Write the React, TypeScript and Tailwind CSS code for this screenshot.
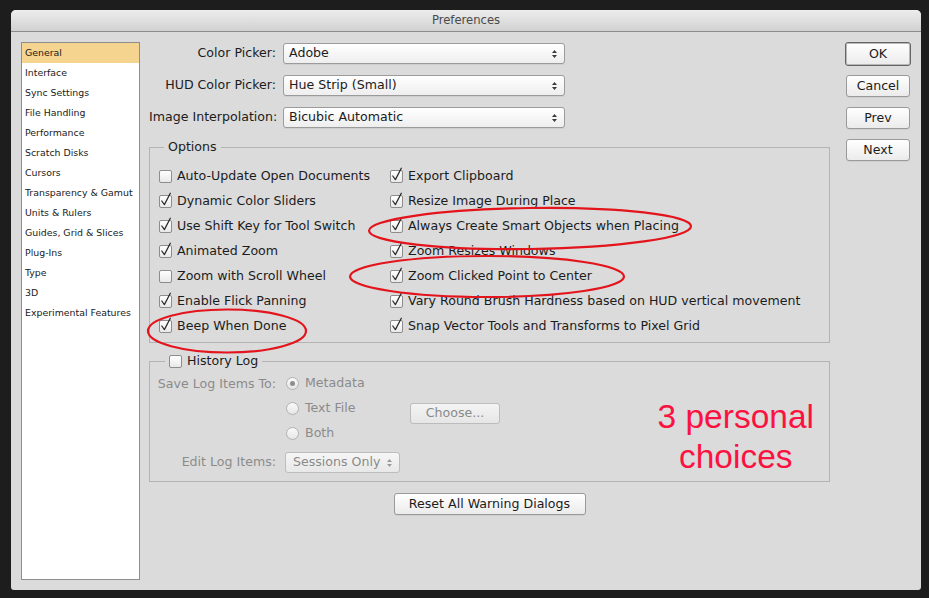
import React from "react";

const sidebarItems = [
  "General",
  "Interface",
  "Sync Settings",
  "File Handling",
  "Performance",
  "Scratch Disks",
  "Cursors",
  "Transparency & Gamut",
  "Units & Rulers",
  "Guides, Grid & Slices",
  "Plug-Ins",
  "Type",
  "3D",
  "Experimental Features",
];

const leftOptions: [string, boolean][] = [
  ["Auto-Update Open Documents", false],
  ["Dynamic Color Sliders", true],
  ["Use Shift Key for Tool Switch", true],
  ["Animated Zoom", true],
  ["Zoom with Scroll Wheel", false],
  ["Enable Flick Panning", true],
  ["Beep When Done", true],
];

const rightOptions: [string, boolean][] = [
  ["Export Clipboard", true],
  ["Resize Image During Place", true],
  ["Always Create Smart Objects when Placing", true],
  ["Zoom Resizes Windows", true],
  ["Zoom Clicked Point to Center", true],
  ["Vary Round Brush Hardness based on HUD vertical movement", true],
  ["Snap Vector Tools and Transforms to Pixel Grid", true],
];

function Checkbox({ checked }: { checked?: boolean }) {
  return (
    <span className="relative inline-block w-[13px] h-[13px] shrink-0 rounded-[2px] border border-[#8d8d8d] bg-linear-to-b from-white to-[#e9e9e9]">
      {checked && (
        <svg
          className="absolute left-[-1px] top-[-1px] overflow-visible"
          width="13"
          height="13"
          viewBox="0 0 13 13"
        >
          <path
            d="M2.8 6 L5.4 9.6 L11.3 -1.8"
            fill="none"
            stroke="#2a2a2a"
            strokeWidth="1.25"
            strokeLinecap="round"
            strokeLinejoin="round"
          />
        </svg>
      )}
    </span>
  );
}

function Radio({ selected }: { selected?: boolean }) {
  return (
    <span className="flex items-center justify-center w-[13px] h-[13px] shrink-0 rounded-full border border-[#b2b2b2] bg-linear-to-b from-[#fafafa] to-[#e6e6e6]">
      {selected && <span className="w-[5px] h-[5px] rounded-full bg-[#8e8e8e]" />}
    </span>
  );
}

function Arrows({ color }: { color: string }) {
  return (
    <svg width="7" height="10" viewBox="0 0 7 10">
      <path d="M1 4 L3.5 1 L6 4 Z" fill={color} />
      <path d="M1 6 L3.5 9 L6 6 Z" fill={color} />
    </svg>
  );
}

function Select({ value, disabled }: { value: string; disabled?: boolean }) {
  return (
    <div
      className={
        disabled
          ? "flex items-center justify-between h-[21px] pl-[7px] pr-[6px] rounded-[3px] border border-[#bdbdbd] bg-linear-to-b from-[#f6f6f6] to-[#e8e8e8] text-[#8a8a8a]"
          : "flex items-center justify-between h-[21px] pl-[5px] pr-[6px] rounded-[3px] border border-[#9b9b9b] bg-linear-to-b from-white to-[#eeeeee] shadow-[0_1px_0_rgba(0,0,0,0.06)]"
      }
    >
      <span>{value}</span>
      <Arrows color={disabled ? "#9a9a9a" : "#3a3a3a"} />
    </div>
  );
}

function Button({
  label,
  className,
  disabled,
}: {
  label: string;
  className: string;
  disabled?: boolean;
}) {
  return (
    <div
      className={
        "flex items-center justify-center rounded-[3px] bg-linear-to-b " +
        (disabled
          ? "border border-[#bcbcbc] from-[#f4f4f4] to-[#e6e6e6] text-[#8a8a8a] "
          : "border border-[#9a9a9a] from-white to-[#ebebeb] shadow-[0_1px_0_rgba(0,0,0,0.06)] ") +
        className
      }
    >
      {label}
    </div>
  );
}

export default function App() {
  return (
    <div className="relative w-[929px] h-[598px] overflow-hidden bg-[#1d1d1d] pt-[10px] pl-[11px] font-['DejaVu_Sans',sans-serif] text-[12.6px] text-[#1c1c1c]">
      <div className="w-[910px] h-[580px] flex flex-col overflow-hidden rounded-t-[5px] rounded-b-[3px] bg-[#dbdbdb]">
        {/* title bar */}
        <div className="h-[22px] shrink-0 flex items-center justify-center border-b border-[#8c8c8c] bg-linear-to-b from-[#ededed] to-[#d1d1d1] text-[11.6px] text-[#4a4a4a]">
          Preferences
        </div>

        <div className="flex px-[10px] pt-[10px]">
          {/* sidebar */}
          <div className="w-[119px] h-[538px] shrink-0 border border-[#8e8e8e] bg-white text-[9.4px] text-[#1a1a1a]">
            {sidebarItems.map((item, i) => (
              <div
                key={item}
                className={
                  "h-[20px] flex items-center pl-[3px] " + (i === 0 ? "bg-[#f4d48e]" : "")
                }
              >
                {item}
              </div>
            ))}
          </div>

          {/* main */}
          <div className="ml-[9px] w-[681px] shrink-0 flex flex-col">
            <div className="mt-[1px] flex flex-col gap-[11px]">
              {[
                ["Color Picker:", "Adobe"],
                ["HUD Color Picker:", "Hue Strip (Small)"],
                ["Image Interpolation:", "Bicubic Automatic"],
              ].map(([label, value]) => (
                <div key={label} className="flex items-center h-[21px]">
                  <div className="w-[127px] shrink-0 text-right whitespace-nowrap">{label}</div>
                  <div className="ml-[7px] w-[282px]">
                    <Select value={value} />
                  </div>
                </div>
              ))}
            </div>

            {/* Options */}
            <div className="mt-[19px] border border-[#b3b3b3] pl-[9px] pb-[3px]">
              <div className="-mt-[9px] ml-[5px] w-fit h-[16px] px-[4px] leading-[16px] bg-[#dbdbdb]">
                Options
              </div>
              <div className="mt-[9px] flex">
                <div className="w-[231px] shrink-0 flex flex-col">
                  {leftOptions.map(([label, checked]) => (
                    <div key={label} className="h-[25px] flex items-center gap-[5px] whitespace-nowrap">
                      <Checkbox checked={checked} />
                      <span>{label}</span>
                    </div>
                  ))}
                </div>
                <div className="flex flex-col">
                  {rightOptions.map(([label, checked]) => (
                    <div key={label} className="h-[25px] flex items-center gap-[5px] whitespace-nowrap">
                      <Checkbox checked={checked} />
                      <span>{label}</span>
                    </div>
                  ))}
                </div>
              </div>
            </div>

            {/* History Log */}
            <div className="relative mt-[18px] border border-[#b3b3b3] pb-[8px]">
              <div className="-mt-[9px] ml-[15px] w-fit h-[16px] px-[4px] flex items-center gap-[5px] bg-[#dbdbdb]">
                <Checkbox />
                <span>History Log</span>
              </div>

              <div className="mt-[2px] flex text-[#8b8b8b]">
                <div className="w-[126px] shrink-0 h-[25px] leading-[25px] text-right whitespace-nowrap">
                  Save Log Items To:
                </div>
                <div className="ml-[10px] w-[124px] shrink-0 flex flex-col">
                  {[
                    ["Metadata", true],
                    ["Text File", false],
                    ["Both", false],
                  ].map(([label, sel]) => (
                    <div key={label as string} className="h-[25px] flex items-center gap-[6px]">
                      <Radio selected={sel as boolean} />
                      <span>{label as string}</span>
                    </div>
                  ))}
                </div>
                <div className="pt-[32px]">
                  <Button label="Choose..." disabled className="w-[90px] h-[21px]" />
                </div>
              </div>

              <div className="mt-[6px] flex items-center h-[21px] text-[#8b8b8b]">
                <div className="w-[126px] shrink-0 text-right">Edit Log Items:</div>
                <div className="ml-[9px] w-[115px]">
                  <Select value="Sessions Only" disabled />
                </div>
              </div>

              <div className="absolute right-[15px] top-[35px] text-center leading-[40px] text-[33.5px] font-['Liberation_Sans',Arial,sans-serif] text-[#fb1240]">
                3 personal
                <br />
                choices
              </div>
            </div>

            <Button label="Reset All Warning Dialogs" className="mt-[11px] mx-auto w-[192px] h-[22px]" />
          </div>

          {/* buttons */}
          <div className="ml-[15px] w-[66px] shrink-0 flex flex-col items-center">
            <div className="w-[66px] h-[24px] flex items-center justify-center rounded-[3px] border border-[#656565] bg-linear-to-b from-white to-[#ebebeb] shadow-[inset_0_0_0_1px_#b8b8b8]">
              OK
            </div>
            <Button label="Cancel" className="mt-[9px] w-[64px] h-[22px]" />
            <Button label="Prev" className="mt-[10px] w-[64px] h-[22px]" />
            <Button label="Next" className="mt-[10px] w-[64px] h-[22px]" />
          </div>
        </div>
      </div>

      {/* red annotations */}
      <svg
        className="absolute left-0 top-0 pointer-events-none"
        width="929"
        height="598"
        viewBox="0 0 929 598"
      >
        <g fill="none" stroke="#e3141c" strokeWidth="2.2">
          <ellipse cx="227" cy="331" rx="79" ry="21.5" />
          <ellipse cx="530" cy="228.5" rx="161" ry="20.5" transform="rotate(-0.8 530 228.5)" />
          <ellipse cx="487" cy="276.5" rx="137" ry="20.5" />
        </g>
      </svg>
    </div>
  );
}
